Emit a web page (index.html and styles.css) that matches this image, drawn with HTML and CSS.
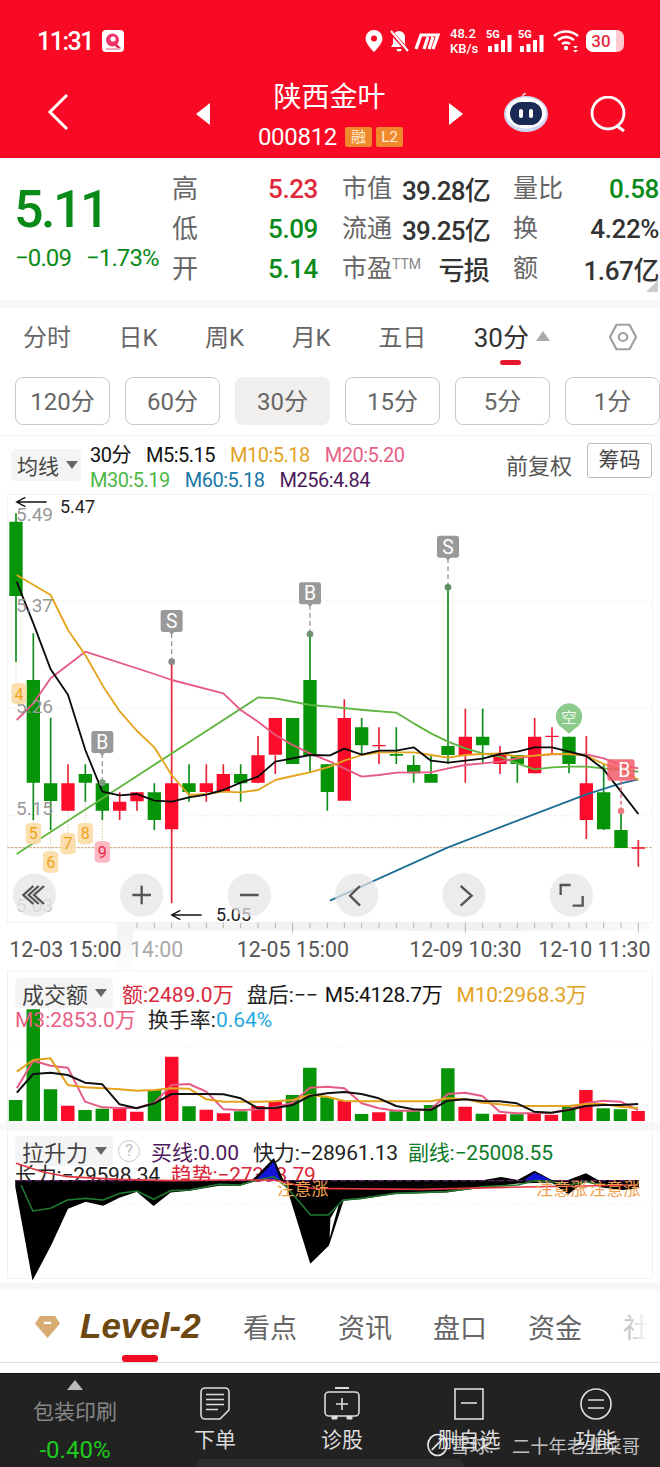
FILE: index.html
```html
<!DOCTYPE html>
<html lang="zh-CN">
<head>
<meta charset="utf-8">
<title>陕西金叶 000812</title>
<link rel="stylesheet" href="styles.css">
</head>
<body>
<div class="page">
  <header class="header">
    <div class="status">
      <span class="time">11:31</span>
      <svg class="appicon" viewBox="0 0 22 22"><rect width="22" height="22" rx="4" fill="#fff"/><circle cx="10.500" cy="10" r="6.500" fill="#f0356a"/><circle cx="11" cy="9" r="2.600" fill="#fff"/><path d="M13 14l5 5" stroke="#e8305c" stroke-width="2.500"/><rect x="4" y="18" width="14" height="2" fill="#f7a8c0"/></svg>
      <span class="status-right">
        <svg class="st-pin" viewBox="0 0 18 22"><path d="M9 0a8.500 8.500 0 0 0-8.500 8.500C.5 14 9 22 9 22s8.500-8 8.500-13.500A8.500 8.500 0 0 0 9 0z" fill="#fff"/><circle cx="9" cy="8.500" r="3" fill="#f80a24"/></svg>
        <svg class="st-bell" viewBox="0 0 20 24"><path d="M10 2a6 6 0 0 0-6 6v7l-2 3h16l-2-3V8a6 6 0 0 0-6-6z" fill="#fff"/><path d="M7.500 20a2.500 2.500 0 0 0 5 0z" fill="#fff"/><path d="M1 2l18 20" stroke="#f80a24" stroke-width="4"/><path d="M2 2l17 20" stroke="#fff" stroke-width="2"/></svg>
        <svg class="st-m" viewBox="0 0 26 18"><path d="M2 17L7 3h17l-5 14M10 17l4-12M15 17l4-12" fill="none" stroke="#fff" stroke-width="3.200"/></svg>
        <span class="speed"><b>48.2</b><b>KB/s</b></span>
        <svg class="st-sig" viewBox="0 0 27 24"><text x="0" y="9" class="sig5g">5G</text><path d="M2 17h4v6H2zM8.500 15h4v8h-4zM15 11h4v12h-4zM21.500 6h4v17h-4z" fill="#fff"/></svg>
        <svg class="st-sig" viewBox="0 0 27 24"><text x="0" y="9" class="sig5g">5G</text><path d="M2 17h4v6H2zM8.500 15h4v8h-4zM15 11h4v12h-4zM21.500 6h4v17h-4z" fill="#fff"/></svg>
        <svg class="st-wifi" viewBox="0 0 26 24"><path d="M1 7c7-6 17-6 24 0M5 11c5-4 11-4 16 0M9 15c3-2 5-2 8 0" fill="none" stroke="#fff" stroke-width="2.600"/><circle cx="13" cy="19" r="2.200" fill="#fff"/><path d="M20 17l2.500 2.500L25 17zM20 21l2.500 2.500L25 21z" fill="#fff"/></svg>
        <span class="battery"><span class="battery-num">30</span><span class="battery-rest"></span></span>
      </span>
    </div>
    <nav class="nav">
      <svg class="back" viewBox="0 0 22 38"><path d="M20 2L3 19l17 17" fill="none" stroke="#fff" stroke-width="3"/></svg>
      <span class="tri-l"></span>
      <div class="stock">
        <div class="stock-name">陕西金叶</div>
        <div class="stock-code">000812<span class="badge">融</span><span class="badge">L2</span></div>
      </div>
      <span class="tri-r"></span>
      <svg class="robot" viewBox="0 0 44 42"><path d="M19 7c-1-3 1-5 3-4" fill="none" stroke="#f6d8dc" stroke-width="1.600"/><ellipse cx="22" cy="23" rx="22" ry="18" fill="#cfd6f2"/><ellipse cx="22" cy="22" rx="20" ry="15.500" fill="#fff"/><rect x="6" y="11" width="32" height="23" rx="11.500" fill="#1a2a55"/><rect x="15" y="18" width="4" height="9" rx="2" fill="#fff"/><rect x="25" y="18" width="4" height="9" rx="2" fill="#fff"/></svg>
      <svg class="search" viewBox="0 0 38 36"><circle cx="18" cy="17" r="16" fill="none" stroke="#fff" stroke-width="2.800"/><path d="M27 30l7 5" stroke="#fff" stroke-width="3"/></svg>
    </nav>
  </header>

  <section class="quote">
    <div class="price">
      <div class="price-main">5.11</div>
      <div class="price-sub"><span>−0.09</span><span>−1.73%</span></div>
    </div>
    <div class="stats">
      <span class="lab">高</span><span class="val up">5.23</span>
      <span class="lab lab-w">市值</span><span class="val2">39.28亿</span>
      <span class="lab lab-w">量比</span><span class="val down">0.58</span>
      <span class="lab">低</span><span class="val down">5.09</span>
      <span class="lab lab-w">流通</span><span class="val2">39.25亿</span>
      <span class="lab lab-w">换</span><span class="val dark">4.22%</span>
      <span class="lab">开</span><span class="val down">5.14</span>
      <span class="lab lab-w">市盈<sup class="ttm">TTM</sup></span><span class="val2">亏损</span>
      <span class="lab lab-w">额</span><span class="val dark">1.67亿</span>
    </div>
    <span class="corner"></span>
  </section>
  <div class="band-top"></div>

  <div class="tabs">
    <span class="tab">分时</span><span class="tab">日K</span><span class="tab">周K</span><span class="tab">月K</span><span class="tab">五日</span>
    <span class="tab tab-on">30分<span class="tri-up"></span></span>
    <svg class="hex" viewBox="0 0 30 32" preserveAspectRatio="none"><path d="M8 2h14l7 14-7 14H8L1 16z" fill="none" stroke="#a0a0a0" stroke-width="2.400" stroke-linejoin="round"/><circle cx="15" cy="16" r="4.500" fill="none" stroke="#a0a0a0" stroke-width="2.400"/></svg>
  </div>

  <div class="periods">
    <span class="period">120分</span><span class="period">60分</span><span class="period period-on">30分</span><span class="period">15分</span><span class="period">5分</span><span class="period">1分</span>
  </div>

  <div class="legend">
    <span class="chip chip-ma">均线<i class="caret"></i></span>
    <div class="ma">
      <div class="ma-row"><span class="k">30分</span><span class="k">M5:5.15</span><span class="o">M10:5.18</span><span class="p">M20:5.20</span></div>
      <div class="ma-row"><span class="g">M30:5.19</span><span class="b">M60:5.18</span><span class="v">M256:4.84</span></div>
    </div>
    <span class="adj">前复权</span>
    <span class="chips-btn">筹码</span>
  </div>

  <svg class="kchart" viewBox="0 0 1980 1440">
    <defs>
      <linearGradient id="axisband" x1="0" x2="1" y1="0" y2="0"><stop offset="0" stop-color="#f4f4f4"/><stop offset=".75" stop-color="#efefef"/><stop offset="1" stop-color="#fafafa"/></linearGradient>
      <linearGradient id="axisfade" x1="0" x2="0" y1="0" y2="1"><stop offset="0" stop-color="#f3f3f3"/><stop offset="1" stop-color="#fdfdfd"/></linearGradient>
    </defs>
    <rect x="350" y="1298" width="50" height="142" fill="url(#axisfade)"/>
    <rect x="350" y="1298" width="1600" height="24" fill="url(#axisband)"/>
    <rect x="22" y="14" width="1936" height="1284" fill="none" stroke="#ececec" stroke-width="2"/>
    <path d="M22 333H1958M22 655H1958M22 977H1958" stroke="#ececec" stroke-width="2" stroke-dasharray="10 8" fill="none"/>
    <path d="M22 1073H1958" stroke="#c9a36c" stroke-width="3" stroke-dasharray="8 3" fill="none"/>

    <path class="wick-g" d="M48 70V515M100 430V990M152 683V1020M256 823V935M307 870V990M463 880V1020M567 823V935M722 823V935M930 432V848M982 823V962M1085 684V794M1189 712V822M1241 796V878M1293 796V852M1344 292V822M1448 656V820M1552 795V878M1707 740V850M1811 825V1020M1863 963V1074"/>
    <path class="wick-r" d="M204 823V962M359 907V990M411 907V962M515 515V1240M619 823V935M670 823V906M774 738V880M826 796V852M1033 628V880M1137 712V822M1396 656V878M1500 768V852M1604 684V850M1656 712V795M1759 738V1047M1915 1050V1130"/>
    <path class="body-g" d="M28 95h40v223h-40zM80 570h40v308h-40zM132 880h40v53h-40zM236 852h40v26h-40zM287 880h40v82h-40zM443 907h40v83h-40zM547 880h40v26h-40zM702 852h40v28h-40zM858 684h40v138h-40zM910 570h40v226h-40zM962 823h40v83h-40zM1065 712h40v54h-40zM1169 792h40v5h-40zM1221 825h40v25h-40zM1273 852h40v26h-40zM1324 768h40v27h-40zM1428 740h40v26h-40zM1532 795h40v27h-40zM1687 740h40v82h-40zM1791 907h40v111h-40zM1843 1020h40v54h-40z"/>
    <path class="body-r" d="M184 880h40v82h-40zM339 935h40v27h-40zM391 907h40v27h-40zM495 880h40v138h-40zM599 880h40v26h-40zM650 852h40v54h-40zM754 796h40v82h-40zM806 684h40v110h-40zM1013 684h40v248h-40zM1117 765h40v4h-40zM1376 740h40v55h-40zM1480 795h40v27h-40zM1584 740h40v110h-40zM1636 737h40v4h-40zM1739 880h40v110h-40zM1895 1072h40v4h-40z"/>

    <polyline class="l-g" points="50,1092 775,622 826,625 930,645 990,650 1090,660 1189,668 1241,700 1293,730 1344,755 1396,775 1448,790 1500,800 1552,820 1604,838 1656,832 1707,830 1759,830 1811,835 1863,840 1915,845"/>
    <polyline class="l-b" points="990,1232 1344,1072 1759,913 1863,880 1915,868"/>
    <polyline class="l-p" points="50,690 100,640 152,565 256,485 463,552 515,570 670,610 722,660 774,695 826,735 878,765 930,790 990,815 1033,835 1085,860 1137,855 1189,848 1241,847 1293,847 1344,835 1396,825 1448,820 1500,815 1552,805 1604,797 1656,793 1707,793 1759,793 1811,805 1863,825 1915,835"/>
    <polyline class="l-o" points="50,255 152,315 204,420 256,495 310,590 360,665 411,723 463,772 515,855 567,915 619,912 670,905 722,907 774,900 826,870 878,858 930,847 990,830 1033,812 1085,795 1137,787 1189,787 1241,787 1293,795 1344,803 1396,795 1448,792 1500,790 1552,800 1604,797 1656,792 1707,792 1759,797 1811,822 1863,838 1915,870"/>
    <polyline class="l-k" points="50,275 100,400 152,538 204,614 256,780 307,905 359,916 411,912 463,932 515,935 567,922 619,914 670,900 722,878 774,860 826,815 878,805 930,795 990,796 1033,776 1085,794 1137,782 1189,782 1241,772 1293,812 1344,818 1396,812 1448,806 1500,792 1552,785 1604,772 1656,772 1707,785 1759,798 1811,838 1863,905 1915,972"/>

    <text x="48" y="92" class="px">5.49</text>
    <text x="48" y="365" class="px">5.37</text>
    <text x="48" y="670" class="px">5.26</text>
    <text x="48" y="975" class="px">5.15</text>
    <text x="48" y="1265" class="px px-dim">5.03</text>

    <g class="td-lines"><path d="M48 515V580M100 990V1000M152 1020V1085M204 962V1030M256 935V1000M307 990V1055"/></g>
    <g class="td"><path d="M34 585l10-6h26l10 6v52l-10 6h-26l-10-6z"/><path d="M77 1005l10-6h26l10 6v52l-10 6h-26l-10-6z"/><path d="M129 1090l10-6h26l10 6v52l-10 6h-26l-10-6z"/><path d="M181 1035l10-6h26l10 6v52l-10 6h-26l-10-6z"/><path d="M233 1005l10-6h26l10 6v52l-10 6h-26l-10-6z"/></g>
    <path class="td-red" d="M284 1060l10-6h26l10 6v52l-10 6h-26l-10-6z"/>
    <text x="57" y="630" class="tdn">4</text><text x="100" y="1048" class="tdn">5</text><text x="152" y="1133" class="tdn">6</text><text x="204" y="1078" class="tdn">7</text><text x="256" y="1048" class="tdn">8</text><text x="307" y="1103" class="tdn tdn-r">9</text>

    <g class="mk-line"><path d="M515 430V510M930 345V428M307 790V872M1344 205V288"/></g>
    <path class="mk-redline" d="M1863 872V958"/>
    <g class="mk"><path d="M490 360h50a8 8 0 0 1 8 8v50a8 8 0 0 1-8 8h-17l-8 8-8-8h-17a8 8 0 0 1-8-8v-50a8 8 0 0 1 8-8z"/><path d="M905 277h50a8 8 0 0 1 8 8v50a8 8 0 0 1-8 8h-17l-8 8-8-8h-17a8 8 0 0 1-8-8v-50a8 8 0 0 1 8-8z"/><path d="M282 723h50a8 8 0 0 1 8 8v50a8 8 0 0 1-8 8h-17l-8 8-8-8h-17a8 8 0 0 1-8-8v-50a8 8 0 0 1 8-8z"/><path d="M1319 137h50a8 8 0 0 1 8 8v50a8 8 0 0 1-8 8h-17l-8 8-8-8h-17a8 8 0 0 1-8-8v-50a8 8 0 0 1 8-8z"/></g>
    <circle cx="515" cy="515" r="10" fill="#8a8a8a"/><circle cx="930" cy="432" r="10" fill="#6f8f70"/><circle cx="307" cy="878" r="10" fill="#7b9a7c"/><circle cx="1344" cy="292" r="10" fill="#5f8c60"/><circle cx="1863" cy="963" r="10" fill="#ee7a80"/>
    <text x="515" y="413" class="mkt">S</text><text x="930" y="330" class="mkt">B</text><text x="307" y="776" class="mkt">B</text><text x="1344" y="191" class="mkt">S</text>
    <path d="M1830 808h66a8 8 0 0 1 8 8v48a8 8 0 0 1-8 8h-66a8 8 0 0 1-8-8v-48a8 8 0 0 1 8-8z" fill="#f55b6b" fill-opacity=".85"/>
    <text x="1873" y="860" class="mkt">B</text>
    <path d="M1707 640a40 40 0 0 1 18 75.500l-18 16-18-16A40 40 0 0 1 1707 640z" fill="#8ccb8c"/>
    <text x="1707" y="698" class="kong">空</text>

    <path class="arrow" d="M140 36H50M76 22L50 36l26 14M605 1275H515M541 1261l-26 14 26 14"/>
    <text x="180" y="68" class="ann">5.47</text>
    <text x="648" y="1292" class="ann">5.05</text>

    <g class="rb"><circle cx="103" cy="1215" r="65"/><circle cx="425" cy="1215" r="65"/><circle cx="748" cy="1215" r="65"/><circle cx="1070" cy="1215" r="65"/><circle cx="1392" cy="1215" r="65"/><circle cx="1714" cy="1215" r="65"/></g>
    <path class="rbi" d="M100 1188l-30 27 30 27M116 1188l-30 27 30 27M132 1188l-30 27 30 27M397 1215h56M425 1187v56M720 1215h56M1080 1188l-30 29 30 30M1382 1188l33 29-33 30M1682 1215v-30h30M1718 1247h30v-29"/>

    <path class="tick" d="M411 1298v16M463 1298v16M515 1298v16M567 1298v16M619 1298v16M670 1298v16M722 1298v16M774 1298v16M826 1298v16M878 1298v30M930 1298v16M982 1298v16M1033 1298v16M1085 1298v16M1137 1298v16M1189 1298v16M1241 1298v16M1293 1298v16M1344 1298v16M1396 1298v30M1448 1298v16M1500 1298v16M1552 1298v16M1604 1298v16M1656 1298v16M1707 1298v16M1759 1298v16M1811 1298v16M1863 1298v16M1915 1298v30"/>
    <text x="28" y="1400" class="ax">12-03 15:00</text>
    <text x="390" y="1400" class="ax ax-dim">14:00</text>
    <text x="710" y="1400" class="ax">12-05 15:00</text>
    <text x="1228" y="1400" class="ax">12-09 10:30</text>
    <text x="1615" y="1400" class="ax">12-10 11:30</text>
  </svg>

  <section class="sub sub-vol">
    <div class="sub-legend">
      <div class="sub-row"><span class="chip chip-sub">成交额<i class="caret"></i></span><span class="r sp1">额:2489.0万</span><span class="k2 sp2">盘后:−−</span><span class="k sp3">M5:4128.7万</span><span class="o sp4">M10:2968.3万</span></div>
      <div class="sub-row2"><span class="p">M3:2853.0万</span><span class="k2 sp5">换手率:<span class="c">0.64%</span></span></div>
    </div>
    <svg class="sub-svg" viewBox="0 0 1568 459" preserveAspectRatio="none">
      <rect x="18" y="3" width="1532" height="456" fill="none" stroke="#eee" stroke-width="2"/>
      <path d="M18 228H1550" stroke="#ececec" stroke-width="1.500" stroke-dasharray="6 6"/>
      <path class="body-g" d="M21 390h32v63h-32zM63 118h32v335h-32zM104 358h32v95h-32zM186 420h32v33h-32zM227 416h32v37h-32zM351 360h32v93h-32zM433 409h32v44h-32zM556 424h32v29h-32zM679 375h32v78h-32zM720 293h32v160h-32zM761 382h32v71h-32zM843 432h32v21h-32zM925 424h32v29h-32zM966 424h32v29h-32zM1007 405h32v48h-32zM1048 295h32v158h-32zM1130 431h32v22h-32zM1212 433h32v20h-32zM1335 410h32v43h-32zM1417 415h32v38h-32zM1458 418h32v35h-32z"/>
      <path class="body-r" d="M145 407h32v46h-32zM268 416h32v37h-32zM309 425h32v28h-32zM392 260h32v193h-32zM474 419h32v34h-32zM515 430h32v23h-32zM597 408h32v45h-32zM638 395h32v58h-32zM802 393h32v60h-32zM884 427h32v26h-32zM1089 410h32v43h-32zM1171 433h32v20h-32zM1253 428h32v25h-32zM1294 434h32v19h-32zM1376 360h32v93h-32zM1500 423h32v30h-32z"/>
      <polyline class="sl sl-p" points="40,355 79,272 120,287 161,293 202,395 243,412 284,414 325,414 367,398 408,345 449,342 490,365 531,418 572,420 613,418 654,412 695,398 736,353 777,350 818,355 859,400 900,415 941,422 982,422 1023,418 1064,372 1105,368 1146,378 1187,425 1228,430 1269,430 1310,428 1351,418 1392,400 1433,392 1474,395 1516,420"/>
      <polyline class="sl sl-o" points="40,305 79,270 120,265 161,345 202,352 243,355 284,358 325,362 367,360 408,355 449,356 490,388 531,395 572,395 613,395 654,394 695,390 736,375 777,380 818,393 859,394 900,394 941,394 982,394 1023,394 1064,385 1105,388 1146,398 1187,403 1228,408 1269,408 1310,408 1351,408 1392,402 1433,402 1474,410 1516,415"/>
      <polyline class="sl sl-k" points="40,368 79,312 120,308 161,315 202,338 243,343 284,403 325,415 367,400 408,372 449,372 490,372 531,373 572,385 613,415 654,414 695,405 736,378 777,370 818,366 859,372 900,385 941,408 982,418 1023,420 1064,392 1105,388 1146,393 1187,394 1228,400 1269,425 1310,428 1351,420 1392,408 1433,405 1474,405 1516,402"/>
    </svg>
  </section>
  <div class="band-sm"></div>

  <section class="sub sub-ind">
    <div class="sub-legend">
      <div class="sub-row"><span class="chip chip-sub">拉升力<i class="caret"></i></span><span class="help">?</span><span class="v sp6">买线:0.00</span><span class="k2 sp7">快力:−28961.13</span><span class="dg sp8">副线:−25008.55</span></div>
      <div class="sub-row3"><span class="k2">长力:−29598.34</span><span class="r sp9">趋势:−27393.79</span></div>
    </div>
    <svg class="sub-svg" viewBox="0 0 1568 459" preserveAspectRatio="none">
      <rect x="18" y="0" width="1532" height="445" fill="none" stroke="#eee" stroke-width="2"/>
      <path d="M18 222H1550" stroke="#ececec" stroke-width="1.500" stroke-dasharray="6 6"/>
      <polygon class="ind-fill" points="38,152 600,152 650,88 672,152 1150,152 1190,143 1230,152 1270,125 1310,152 1350,152 1392,132 1420,152 1516,152 1516,172 1480,178 1430,170 1392,150 1350,190 1310,155 1230,158 1190,165 1150,170 1060,185 940,190 860,205 815,210 780,345 738,397 680,160 650,140 610,150 570,165 520,165 450,180 405,185 365,225 325,183 285,200 245,225 203,213 160,235 120,345 78,445 38,170"/>
      <polygon class="ind-blue" points="610,148 650,95 666,150"/>
      <polygon class="ind-blue" points="1245,150 1270,128 1310,150"/>
      <polygon class="ind-white" points="785,265 805,222 783,325"/>
      <path d="M38 152H1516" stroke="#7a2a86" stroke-width="3" stroke-dasharray="16 6"/>
      <polyline class="il il-dg" points="50,165 78,243 120,235 160,210 203,205 245,210 285,190 325,183 365,208 405,182 450,180 520,163 570,165 610,150 650,140 680,170 738,255 780,255 815,210 860,205 940,190 1060,185 1150,170 1230,165 1270,152 1310,155 1350,165 1392,155 1430,165 1516,165"/>
      <polyline class="il il-r" points="38,100 100,125 160,140 280,148 400,152 560,150 650,150 740,175 1000,178 1200,172 1516,165"/>
    </svg>
    <div class="warn warn-1">注意涨</div>
    <div class="warn warn-2">注意涨</div>
    <div class="warn warn-3">注意涨</div>
  </section>
  <div class="band-sm"></div>

  <div class="btabs">
    <svg class="gem" viewBox="0 0 26 24"><path d="M5 1h16l5 8-13 15L0 9z" fill="#d8ab72"/><rect x="9" y="7" width="8" height="2.500" fill="#fff"/></svg>
    <span class="lv2">Level-2</span>
    <span class="btab">看点</span><span class="btab">资讯</span><span class="btab">盘口</span><span class="btab">资金</span><span class="btab btab-dim">社区</span>
    <span class="btab-line"></span>
    <span class="btab-fade"></span>
  </div>
  <div class="spacer"></div>

  <footer class="bar">
    <div class="sector">
      <span class="tri-up2"></span>
      <span class="sector-name">包装印刷</span>
      <span class="sector-pct">-0.40%</span>
    </div>
    <div class="act act-1"><svg class="ic-doc" viewBox="0 0 30 33"><path d="M5 1h20a4 4 0 0 1 4 4v18l-9 9H5a4 4 0 0 1-4-4V5a4 4 0 0 1 4-4z" fill="none" stroke="#ddd" stroke-width="1.600"/><path d="M6 7.500h18M6 12.500h18M6 17.500h18M6 22.500h12" stroke="#ddd" stroke-width="1.600"/></svg><span>下单</span></div>
    <div class="act act-2"><svg class="ic-diag" viewBox="0 0 36 33"><path d="M11 1h14" stroke="#ddd" stroke-width="2"/><rect x="1" y="5" width="34" height="24" rx="4" fill="none" stroke="#ddd" stroke-width="1.600"/><path d="M8 29v3h5v-3M23 29v3h5v-3" fill="#ddd" stroke="#ddd" stroke-width="1"/><path d="M18 11v12M12 17h12" stroke="#ddd" stroke-width="1.600"/></svg><span>诊股</span></div>
    <div class="act act-3"><svg class="ic-del" viewBox="0 0 30 33"><rect x="1" y="2" width="28" height="30" fill="none" stroke="#ddd" stroke-width="1.600"/><path d="M7 16h16" stroke="#ddd" stroke-width="1.600"/></svg><span>删自选</span></div>
    <div class="act act-4"><svg class="ic-fn" viewBox="0 0 32 33"><circle cx="16" cy="17" r="15" fill="none" stroke="#ddd" stroke-width="1.600"/><path d="M8 13h16M8 21h16" stroke="#ddd" stroke-width="1.600"/></svg><span>功能</span></div>
    <span class="home"></span>
    <div class="wm"><svg class="wm-logo" viewBox="0 0 22 24"><ellipse cx="11" cy="12" rx="10" ry="11" fill="none" stroke="#e6e6e6" stroke-width="1.800"/><path d="M5 17L16 6" stroke="#e6e6e6" stroke-width="1.800"/></svg><span class="wm-a">雪球:</span><span class="wm-b">二十年老韭菜哥</span></div>
  </footer>
</div>
</body>
</html>
```
FILE: styles.css
```css
* { box-sizing: border-box; }
html, body { margin: 0; padding: 0; background: #fff; }
body { font-family: Roboto, "Noto Sans CJK SC", sans-serif; color: #333; }
.page { width: 660px; height: 1467px; overflow: hidden; position: relative; }

/* header */
.header { background: #f80a24; height: 158px; color: #fff; }
.status { height: 82px; display: flex; align-items: center; padding: 0 37px; }
.time { font-size: 25px; font-weight: 500; width: 65px; letter-spacing: -1.500px; }
.appicon { width: 22px; height: 22px; }
.status-right { margin-left: auto; margin-right: -1px; display: flex; align-items: center; }
.st-pin { width: 18px; height: 22px; margin-left: 0; }
.st-bell { width: 20px; height: 24px; margin-left: 6px; }
.st-m { width: 26px; height: 18px; margin-left: 5px; }
.speed { display: flex; flex-direction: column; margin-left: 10px; font-size: 13px; line-height: 15px; width: 30px; }
.speed b { font-weight: 500; white-space: nowrap; }
.st-sig { width: 27px; height: 24px; margin-left: 6px; }
.st-sig + .st-sig { margin-left: 5px; }
.sig5g { font-size: 11px; font-weight: 700; fill: #fff; font-family: Roboto, sans-serif; }
.st-wifi { width: 26px; height: 24px; margin-left: 8px; }
.battery { margin-left: 7px; width: 38px; height: 22px; border-radius: 7px; background: #ffc9cf; display: flex; overflow: hidden; }
.battery-num { width: 30px; background: #fff; color: #e8293d; font-size: 17px; font-weight: 500; text-align: center; line-height: 22px; border-radius: 7px 0 0 7px; }

.nav { height: 76px; display: flex; align-items: flex-start; position: relative; }
.back { width: 22px; height: 38px; margin: 11px 0 0 47px; }
.tri-l { width: 0; height: 0; margin: 21px 0 0 127px; border: 11px solid transparent; border-left: 0; border-right: 14px solid #fff; }
.tri-r { width: 0; height: 0; margin: 21px 0 0 0; border: 11px solid transparent; border-right: 0; border-left: 14px solid #fff; }
.stock { width: 239px; text-align: center; margin-top: -2px; }
.stock-name { font-size: 28px; line-height: 36px; }
.stock-code { font-size: 24px; line-height: 28px; margin-top: 7px; display: flex; align-items: center; justify-content: center; letter-spacing: -.3px; padding-left: 2px; }
.badge { background: #f0892e; color: #ffe9cf; font-size: 15px; line-height: 20px; height: 20px; width: 27px; margin-left: 4px; text-align: center; border-radius: 2px; letter-spacing: 0; }
.badge:first-of-type { margin-left: 8px; }
.robot { width: 44px; height: 42px; margin: 9px 0 0 41px; }
.search { width: 38px; height: 36px; margin: 14px 0 0 42px; }

/* quote */
.quote { height: 142px; padding: 8px 0 0 16px; display: flex; position: relative; background: #fff; }
.price { width: 156px; padding-top: 15px; color: #0a8a18; }
.price-main { font-size: 52px; font-weight: 500; line-height: 58px; letter-spacing: -2.500px; margin-left: -2px; }
.price-sub { font-size: 24px; line-height: 30px; display: flex; gap: 15px; margin: 4px 0 0 -1px; white-space: nowrap; letter-spacing: -.9px; }
.stats { display: grid; grid-template-columns: 40px 106px 84px 87px 84px 86px; grid-auto-rows: 40px; align-items: center; font-size: 26px; white-space: nowrap; }
.lab { color: #666; }
.lab-w { padding-left: 24px; font-size: 25px; }
.val { text-align: right; font-weight: 500; letter-spacing: -.4px; padding-top: 5px; }
.val2 { text-align: right; color: #333; font-weight: 500; letter-spacing: -.7px; padding-top: 4px; }
.up { color: #e0283a; }
.down { color: #0a8a18; }
.dark { color: #333; }
.ttm { font-size: 14px; color: #888; vertical-align: 8px; line-height: 0; }
.corner { position: absolute; right: 2px; bottom: 8px; width: 0; height: 0; border-left: 12px solid transparent; border-bottom: 12px solid #ccc; }
.band-top { height: 8px; background: #f7f7f7; }

/* tabs */
.tabs { height: 60px; display: flex; align-items: center; gap: 47.500px; padding: 0 23px 6px; font-size: 24px; color: #666; position: relative; white-space: nowrap; }
.tab-on { color: #333; position: relative; font-size: 26px; }
.tab-on::after { content: ""; position: absolute; left: 26px; top: 43px; width: 21px; height: 5px; background: #e8192f; border-radius: 3px; }
.tri-up { display: inline-block; width: 0; height: 0; margin-left: 7px; vertical-align: 6px; border: 7px solid transparent; border-top: 0; border-bottom: 10px solid #aaa; }
.hex { width: 28px; height: 28px; position: absolute; left: 609px; top: 15px; }

.periods { margin-top: 9px; display: flex; gap: 15px; padding-left: 15px; }
.period { width: 95px; height: 48px; flex: none; border: 1px solid #c9c9c9; border-radius: 8px; font-size: 24px; color: #666; line-height: 49px; text-align: center; }
.period-on { background: #f1eeee; border-color: #f1eeee; }

/* legend */
.legend { margin-top: 10px; border-top: 1px solid #f4f4f4; height: 55px; display: flex; padding-left: 11px; position: relative; }
.chip { background: #f4f4f4; border-radius: 5px; display: flex; align-items: center; color: #444; }
.chip-ma { width: 70px; height: 32px; margin-top: 13px; padding-left: 6px; font-size: 21px; }
.caret { display: inline-block; width: 0; height: 0; margin-left: 7px; border: 6px solid transparent; border-bottom: 0; border-top: 8px solid #666; }
.ma { margin-left: 9px; font-size: 20px; line-height: 25px; padding-top: 7px; letter-spacing: -.5px; }
.ma-row { display: flex; gap: 15px; white-space: nowrap; }
.k { color: #111; }
.k2 { color: #222; }
.o { color: #e2a21f; }
.p { color: #e75f85; }
.g { color: #4cb846; }
.b { color: #1878a8; }
.v { color: #4d1a5c; }
.dg { color: #0e7a2a; }
.r { color: #d9283c; }
.c { color: #26a8e0; }
.adj { position: absolute; left: 506px; top: 12px; font-size: 22px; color: #555; }
.chips-btn { position: absolute; left: 587px; top: 7px; width: 65px; height: 35px; border: 1px solid #bbb; border-radius: 3px; font-size: 21px; line-height: 32px; text-align: center; color: #444; }

/* k chart */
.kchart { display: block; width: 660px; height: 480px; }
.wick-g { stroke: #0f8c1a; stroke-width: 5; fill: none; }
.wick-r { stroke: #ea2238; stroke-width: 5; fill: none; }
.body-g { fill: #079408; }
.body-r { fill: #fb0c2a; }
.l-k, .l-o, .l-p, .l-g, .l-b { fill: none; stroke-width: 5.500; stroke-linejoin: round; }
.l-k { stroke: #0a0a0a; }
.l-o { stroke: #e5a31d; }
.l-p { stroke: #e65a82; }
.l-g { stroke: #5eb53f; }
.l-b { stroke: #1f6f96; }
.px { font-size: 57px; fill: #999; font-family: Roboto, sans-serif; }
.px-dim { fill: #bbb; }
.td path, .td-red { stroke: none; }
.td { fill: #fbdca6; fill-opacity: .9; }
.td-red { fill: #fbb8c2; }
.td-lines path { stroke: #cfae7b; stroke-width: 2; stroke-dasharray: 4 4; fill: none; }
.tdn { font-size: 48px; fill: #eea21a; text-anchor: middle; font-family: Roboto, sans-serif; }
.tdn-r { fill: #e8284a; }
.mk { fill: #999; }
.mk-line path { stroke: #999; stroke-width: 4; stroke-dasharray: 14 10; fill: none; }
.mk-redline { stroke: #e65a70; stroke-width: 4; stroke-dasharray: 12 8; fill: none; }
.mkt { font-size: 58px; fill: #fff; text-anchor: middle; font-family: Roboto, sans-serif; }
.kong { font-size: 46px; fill: #eef8ee; text-anchor: middle; font-family: "Noto Sans CJK SC", sans-serif; }
.arrow { stroke: #111; stroke-width: 4; fill: none; }
.ann { font-size: 54px; fill: #222; font-family: Roboto, sans-serif; }
.rb { fill: #e4e4e4; fill-opacity: .72; }
.rbi { stroke: #555; stroke-width: 7; fill: none; }
.tick { stroke: #b5b5b5; stroke-width: 3; fill: none; }
.ax { font-size: 64px; fill: #555; font-family: Roboto, sans-serif; }
.ax-dim { fill: #aaa; }

/* sub charts */
.sub { height: 153px; position: relative; }
.sub-legend { position: absolute; left: 15px; top: 0; right: 0; font-size: 21px; white-space: nowrap; z-index: 1; }
.sub-svg { display: block; width: 660px; height: 153px; position: relative; }
.sub-vol .sub-legend { top: 8px; }
.sub-ind .sub-legend { top: 6px; }
.sub-ind .sub-svg { z-index: 2; }
.sub-vol .sub-svg { z-index: 0; }
.sub-row { display: flex; align-items: center; height: 30px; }
.sub-row2 { display: flex; margin-top: -1px; height: 26px; line-height: 26px; }
.sub-row3 { display: flex; height: 26px; line-height: 26px; margin-top: -4px; letter-spacing: -.2px; }
.chip-sub { width: 98px; height: 30px; font-size: 22px; padding-left: 7px; flex: none; }
.sp1 { margin-left: 9px; }
.sp2 { margin-left: 13px; }
.sp3 { margin-left: 7px; letter-spacing: -.3px; }
.sp4 { margin-left: 14px; letter-spacing: -.2px; }
.sp5 { margin-left: 12px; }
.sp6 { margin-left: 11px; }
.sp7 { margin-left: 14px; letter-spacing: -.2px; }
.sp8 { margin-left: 10px; letter-spacing: -.2px; }
.sp9 { margin-left: 11px; }
.help { width: 22px; height: 22px; margin-left: 5px; border: 1.500px solid #ccc; border-radius: 50%; color: #bbb; font-size: 16px; line-height: 19px; text-align: center; flex: none; }
.sl { fill: none; stroke-width: 2; stroke-linejoin: round; vector-effect: non-scaling-stroke; }
.sl-p { stroke: #e65a82; }
.sl-o { stroke: #e5a31d; }
.sl-k { stroke: #111; }
.ind-fill { fill: #000; stroke: #000; stroke-width: 1.500; vector-effect: non-scaling-stroke; }
.ind-blue { fill: #1414d8; }
.ind-white { fill: #fff; }
.il { fill: none; stroke-width: 1.600; stroke-linejoin: round; vector-effect: non-scaling-stroke; }
.il-dg { stroke: #1f7a30; }
.il-r { stroke: #e0343f; }
.warn { position: absolute; top: 48px; font-size: 17px; line-height: 22px; color: #f0a050; z-index: 3; white-space: nowrap; letter-spacing: .2px; }
.warn-1 { left: 277px; }
.warn-2 { left: 536px; }
.warn-3 { left: 589px; }
.band-sm { height: 7px; background: #f7f7f7; }

/* bottom tabs */
.btabs { height: 73px; border-bottom: 1px solid #ddd; display: flex; align-items: center; position: relative; padding-left: 35px; font-size: 27px; color: #666; overflow: hidden; white-space: nowrap; }
.gem { width: 25px; height: 23px; flex: none; }
.lv2 { margin-left: 20px; margin-right: 43px; font-family: "Liberation Sans", sans-serif; font-weight: 700; font-style: italic; font-size: 35px; color: #6d4710; flex: none; width: 120px; }
.btab { margin-right: 41px; flex: none; }
.btab-dim { color: #c8c8c8; }
.btab-line { position: absolute; left: 122px; bottom: 0; width: 36px; height: 7px; background: #f00a24; border-radius: 3px; }
.btab-fade { position: absolute; right: 0; top: 0; bottom: 0; width: 30px; background: linear-gradient(to right, rgba(255,255,255,0), #fff 60%); }
.spacer { height: 10px; }

/* footer */
.bar { height: 94px; background: #222; position: relative; display: flex; border-top: 1px solid #111; color: #ddd; }
.sector { width: 150px; display: flex; flex-direction: column; align-items: center; }
.tri-up2 { width: 0; height: 0; margin-top: 6px; border: 8px solid transparent; border-top: 0; border-bottom: 10px solid #bbb; }
.sector-name { font-size: 21px; line-height: 28px; color: #888; margin-top: 8px; }
.sector-pct { font-size: 24px; line-height: 28px; color: #1ecb1e; margin-top: 10px; }
.act { position: absolute; top: 13px; display: flex; flex-direction: column; align-items: center; width: 100px; font-size: 21px; line-height: 30px; }
.act svg { height: 33px; }
.act span { margin-top: 5px; }
.ic-doc { width: 30px; }
.ic-diag { width: 36px; }
.ic-del { width: 30px; }
.ic-fn { width: 32px; }
.act-1 { left: 165px; }
.act-2 { left: 292px; }
.act-3 { left: 419px; }
.act-4 { left: 546px; }
.home { position: absolute; left: 197px; bottom: 0; width: 266px; height: 8px; background: #2d2d2d; border-radius: 5px 5px 0 0; }
.wm { position: absolute; left: 427px; top: 56px; display: flex; align-items: center; color: rgba(235,235,235,.8); font-size: 18px; white-space: nowrap; }
.wm-logo { width: 21px; height: 24px; }
.wm-a { margin-left: 2px; font-size: 20px; width: 62px; letter-spacing: -.5px; }
.wm-b { font-size: 18.300px; }
```
